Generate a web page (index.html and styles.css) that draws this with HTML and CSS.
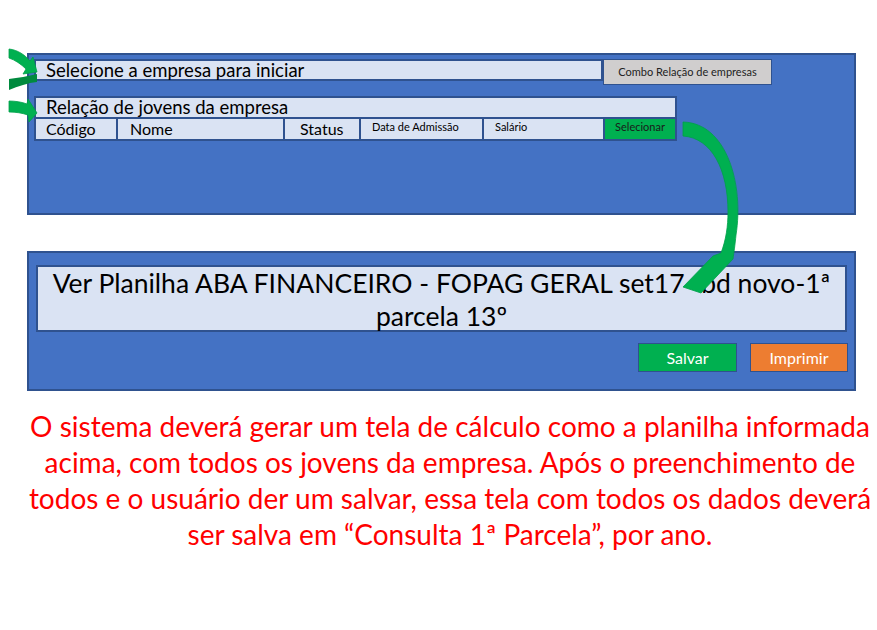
FILE: index.html
```html
<!DOCTYPE html>
<html lang="pt-BR">
<head>
<meta charset="utf-8">
<title>Tela 1ª Parcela</title>
<link rel="stylesheet" href="styles.css">
</head>
<body>
<div class="page">
  <section class="panel panel-top">
    <div class="row-select">
      <div class="field field-select">Selecione a empresa para iniciar</div>
      <div class="combo">Combo Relação de empresas</div>
    </div>
    <div class="list">
      <div class="field field-list">Relação de jovens da empresa</div>
      <div class="cols">
        <div class="col col-big">Código</div>
        <div class="col col-big col-name">Nome</div>
        <div class="col col-big col-status">Status</div>
        <div class="col col-small">Data de Admissão</div>
        <div class="col col-small">Salário</div>
        <div class="col col-small col-select">Selecionar</div>
      </div>
    </div>
  </section>

  <section class="panel panel-bottom">
    <div class="sheet">Ver Planilha ABA FINANCEIRO - FOPAG GERAL set17 -bd novo-1ª<br>parcela 13º</div>
    <div class="actions">
      <div class="btn btn-save">Salvar</div>
      <div class="btn btn-print">Imprimir</div>
    </div>
  </section>

  <p class="note">
    <span class="line">O sistema deverá gerar um tela de cálculo como a planilha informada</span>
    <span class="line">acima, com todos os jovens da empresa. Após o preenchimento de</span>
    <span class="line">todos e o usuário der um salvar, essa tela com todos os dados deverá</span>
    <span class="line">ser salva em “Consulta 1ª Parcela”, por ano.</span>
  </p>

  <svg class="arrows" width="877" height="630" viewBox="0 0 877 630">
    <path d="M9,79 C18,78 28,76 37,74 L37,82 C28,83 18,86 9,90 Z" fill="#008a3e"/>
    <g fill="#00b050" stroke="#00a04a" stroke-width="0.8">
      <path d="M9,49 C18,50 25,55 30,61 L33,57 L37,72 L23,74 L26,69 C21,64 15,60 9,58 Z"/>
      <path d="M9,101 C15,101 22,102 27,104 L28,99 L37,113 L29,122 L28,115 C22,113 16,112 9,112 Z"/>
      <path d="M683,122 C727,123 744,185 736,235 C735,245 734,252 733,259 L701,293 L683,287 L713,256 L721,253 C726,240 728,226 728,212 C728,170 712,138 683,136 Z"/>
    </g>
  </svg>
</div>
</body>
</html>
```
FILE: styles.css
```css
html, body {
  margin: 0;
  padding: 0;
  background: #ffffff;
}
body {
  width: 877px;
  height: 630px;
  overflow: hidden;
  font-family: Lato, "Open Sans", "Liberation Sans", sans-serif;
  color: #000;
}
.page {
  position: relative;
  width: 877px;
  height: 630px;
  padding-top: 53px;
  box-sizing: border-box;
}
.panel {
  margin-left: 27px;
  width: 829px;
  box-sizing: border-box;
  background: #4472c4;
  border: 2px solid #2f528f;
}
.panel-top {
  height: 162px;
  padding: 4px 0 0 5px;
}
.row-select {
  display: flex;
  align-items: flex-start;
}
.field {
  box-sizing: border-box;
  background: #dae3f3;
  border: 2px solid #2f528f;
  padding-left: 10px;
  font-size: 18.5px;
  line-height: 18px;
  white-space: nowrap;
}
.field-select {
  width: 569px;
  height: 22px;
}
.combo {
  box-sizing: border-box;
  width: 169px;
  height: 26px;
  background: #d0cece;
  border: 1px solid #2f528f;
  font-size: 11px;
  line-height: 24px;
  text-align: center;
  color: #222;
}
.list {
  margin-top: 11px;
  width: 643px;
}
.field-list {
  height: 21px;
  line-height: 18px;
  border-bottom: 0;
}
.cols {
  display: grid;
  grid-template-columns: 80px 165px 74px 121px 119px 70px;
  gap: 2px;
  padding: 2px;
  background: #2f528f;
  height: 20px;
}
.col {
  background: #dae3f3;
  white-space: nowrap;
  overflow: hidden;
}
.col-big {
  font-size: 16px;
  line-height: 19px;
  padding-left: 10px;
}
.col-name { padding-left: 12px; }
.col-status { padding-left: 15px; }
.col-small {
  font-size: 11px;
  line-height: 16px;
  padding-left: 11px;
}
.col-select {
  background: #00b050;
  padding-left: 0;
  text-align: center;
  color: #1a1a1a;
}
.panel-bottom {
  margin-top: 36px;
  height: 140px;
  padding: 12px 7px 0 7px;
}
.sheet {
  box-sizing: border-box;
  height: 67px;
  background: #dae3f3;
  border: 2px solid #2f528f;
  text-align: center;
  font-size: 26.5px;
  line-height: 33px;
  white-space: nowrap;
}
.actions {
  display: flex;
  justify-content: flex-end;
  gap: 13px;
  margin-top: 11px;
  margin-right: -1px;
}
.btn {
  box-sizing: border-box;
  width: 99px;
  height: 29px;
  border: 1px solid #2f528f;
  color: #fff;
  font-size: 16px;
  line-height: 27px;
  text-align: center;
}
.btn-save { background: #00b050; }
.btn-print { background: #ed7d31; width: 98px; }
.note {
  margin: 17px 0 0 0;
  width: 900px;
  color: #ff0000;
  font-size: 28px;
  line-height: 36px;
  text-align: center;
}
.line {
  display: block;
  white-space: nowrap;
}
.arrows {
  position: absolute;
  left: 0;
  top: 0;
  pointer-events: none;
}
```
